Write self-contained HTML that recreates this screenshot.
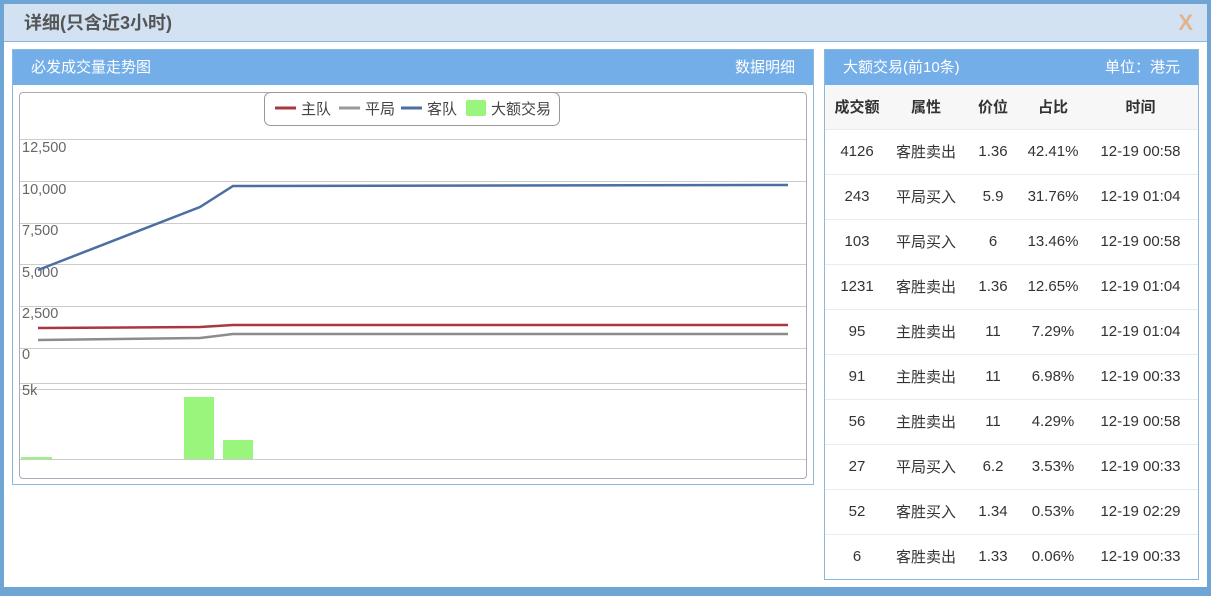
<!DOCTYPE html>
<html><head><meta charset="utf-8"><style>
*{margin:0;padding:0;box-sizing:border-box}
body{width:1211px;height:596px;background:#6fa5d4;font-family:"Liberation Sans","Noto Sans CJK SC",sans-serif;position:relative;overflow:hidden}
.win{position:absolute;left:4px;top:4px;width:1203px;height:583px;background:#fff}
.title{position:absolute;left:0;top:0;width:1203px;height:38px;background:#d3e2f3;border-bottom:1px solid #8fb5db;color:#555;font-size:18px;font-weight:bold;line-height:38px;padding-left:20px}
.x{position:absolute;right:14px;top:0;color:#e0b48c;font-size:22px;font-weight:bold}
.hdr{position:absolute;height:35px;background:#74aee9;color:#fff;font-size:15px;line-height:35px}
.panel{position:absolute;border:1px solid #8ab8de}
table{border-collapse:collapse;width:100%;font-size:15px;color:#333}
td{height:45px;text-align:center;border-top:1px solid #e6ecf2}
th{height:44px;background:#f7f7f7;font-weight:bold;font-size:15px}
</style></head><body>
<div class="win">
<div class="title">详细(只含近3小时)<span class="x">X</span></div>
</div>
<div class="panel" style="left:12px;top:49px;width:802px;height:436px">
<div class="hdr" style="left:0;top:0;width:800px;padding:0 18px"><span>必发成交量走势图</span><span style="float:right">数据明细</span></div>
</div>
<div style="position:absolute;left:19px;top:92px;width:788px;height:387px;border:1px solid #aab;border-radius:4px"></div>
<svg style="position:absolute;left:0;top:0" width="1211" height="596">
<g stroke="#ccc" stroke-width="1">
<line x1="20" y1="139.5" x2="806" y2="139.5"/><line x1="20" y1="181.5" x2="806" y2="181.5"/><line x1="20" y1="223.5" x2="806" y2="223.5"/><line x1="20" y1="264.5" x2="806" y2="264.5"/><line x1="20" y1="306.5" x2="806" y2="306.5"/><line x1="20" y1="348.5" x2="806" y2="348.5"/><line x1="20" y1="383.5" x2="806" y2="383.5"/><line x1="20" y1="389.5" x2="806" y2="389.5"/><line x1="20" y1="459.5" x2="806" y2="459.5"/>
</g>
<g font-size="14.5" fill="#666" font-family="Liberation Sans,sans-serif">
<text x="22" y="152">12,500</text><text x="22" y="194">10,000</text><text x="22" y="235">7,500</text><text x="22" y="277">5,000</text><text x="22" y="318">2,500</text><text x="22" y="359">0</text><text x="22" y="395">5k</text>
</g>
<polyline points="38,270 200,207 233,186 788,185" fill="none" stroke="#4a6fa0" stroke-width="2.5"/>
<polyline points="38,328 200,327 233,325 788,325" fill="none" stroke="#a9383e" stroke-width="2.5"/>
<polyline points="38,340 200,338 233,334 788,334" fill="none" stroke="#8c8c8c" stroke-width="2.5"/>
<g fill="#9af57c"><rect x="184" y="397" width="30" height="62"/><rect x="223" y="440" width="30" height="19"/><rect x="21" y="457" width="31" height="2"/></g>
<rect x="264.5" y="92.5" width="295" height="33" rx="6" fill="#fff" stroke="#999"/>
<line x1="275" y1="108" x2="296" y2="108" stroke="#a9383e" stroke-width="3"/>
<line x1="339" y1="108" x2="360" y2="108" stroke="#999" stroke-width="3"/>
<line x1="401" y1="108" x2="422" y2="108" stroke="#4a6fa0" stroke-width="3"/>
<rect x="466" y="100" width="20" height="16" rx="2" fill="#9af57c"/>
<g font-size="15" fill="#444" font-family="Liberation Sans,Noto Sans CJK SC,sans-serif"><text x="301" y="114">主队</text><text x="365" y="114">平局</text><text x="427" y="114">客队</text><text x="491" y="114">大额交易</text></g>
</svg>
<div class="panel" style="left:824px;top:49px;width:375px;height:531px">
<div class="hdr" style="position:relative;width:373px;padding:0 18px"><span>大额交易(前10条)</span><span style="float:right">单位：港元</span></div>
<table>
<tr><th style="width:64px">成交额</th><th style="width:74px">属性</th><th style="width:60px">价位</th><th style="width:60px">占比</th><th>时间</th></tr>
<tr><td>4126</td><td>客胜卖出</td><td>1.36</td><td>42.41%</td><td>12-19 00:58</td></tr>
<tr><td>243</td><td>平局买入</td><td>5.9</td><td>31.76%</td><td>12-19 01:04</td></tr>
<tr><td>103</td><td>平局买入</td><td>6</td><td>13.46%</td><td>12-19 00:58</td></tr>
<tr><td>1231</td><td>客胜卖出</td><td>1.36</td><td>12.65%</td><td>12-19 01:04</td></tr>
<tr><td>95</td><td>主胜卖出</td><td>11</td><td>7.29%</td><td>12-19 01:04</td></tr>
<tr><td>91</td><td>主胜卖出</td><td>11</td><td>6.98%</td><td>12-19 00:33</td></tr>
<tr><td>56</td><td>主胜卖出</td><td>11</td><td>4.29%</td><td>12-19 00:58</td></tr>
<tr><td>27</td><td>平局买入</td><td>6.2</td><td>3.53%</td><td>12-19 00:33</td></tr>
<tr><td>52</td><td>客胜买入</td><td>1.34</td><td>0.53%</td><td>12-19 02:29</td></tr>
<tr><td>6</td><td>客胜卖出</td><td>1.33</td><td>0.06%</td><td>12-19 00:33</td></tr>
</table>
</div>
</body></html>
